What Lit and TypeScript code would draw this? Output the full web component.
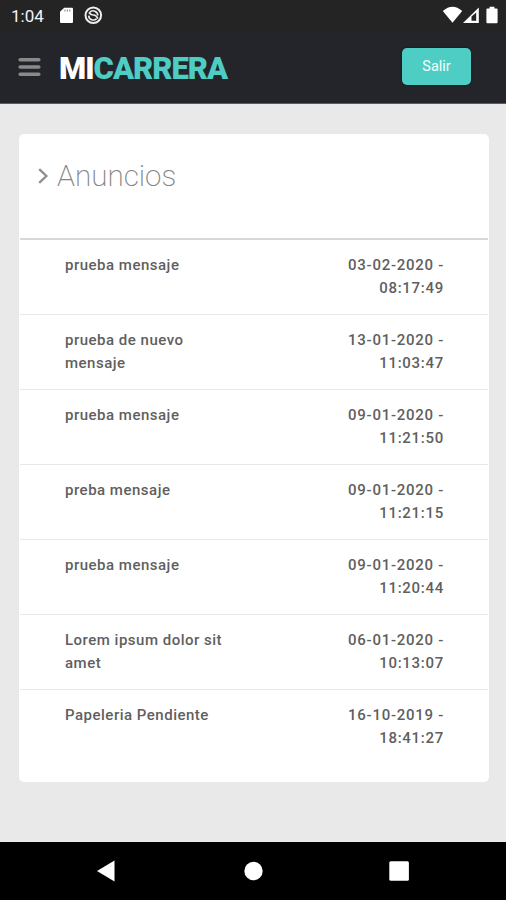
import { LitElement, html, css } from "lit";
import { customElement } from "lit/decorators.js";

interface Notice {
  title: string;
  date: string;
  time: string;
}

const notices: Notice[] = [
  { title: "prueba mensaje", date: "03-02-2020", time: "08:17:49" },
  { title: "prueba de nuevo mensaje", date: "13-01-2020", time: "11:03:47" },
  { title: "prueba mensaje", date: "09-01-2020", time: "11:21:50" },
  { title: "preba mensaje", date: "09-01-2020", time: "11:21:15" },
  { title: "prueba mensaje", date: "09-01-2020", time: "11:20:44" },
  { title: "Lorem ipsum dolor sit amet", date: "06-01-2020", time: "10:13:07" },
  { title: "Papeleria Pendiente", date: "16-10-2019", time: "18:41:27" },
];

@customElement("status-bar")
class StatusBar extends LitElement {
  static styles = css`
    :host {
      display: flex;
      align-items: center;
      height: 32px;
      box-sizing: border-box;
      padding: 0 7px 0 11px;
      background: #242424;
      color: #f4f4f4;
      font-size: 17px;
      line-height: 32px;
    }
    .clock { width: 48px; }
    .left { flex: 1; display: block; height: 32px; }
    .right { display: block; width: 60px; height: 32px; }
  `;
  render() {
    return html`
      <span class="clock">1:04</span>
      <svg class="left" viewBox="0 0 380 32" preserveAspectRatio="xMinYMid meet">
        <path d="M5.2 7.8H13q1 0 1 1V22q0 1-1 1H2q-1 0-1-1V11.8z" fill="#fff" />
        <path d="M6 9.4v2.2M8.4 9.4v2.2M10.8 9.4v2.2" stroke="#888" stroke-width="1.1" />
        <circle cx="34.3" cy="15.3" r="7.8" fill="none" stroke="#eee" stroke-width="2" />
        <path d="M30.6 12.6a4.6 4.6 0 0 1 8.2 3M37.6 18.6a4.6 4.6 0 0 1-7.9-3" fill="none" stroke="#eee" stroke-width="1.6" />
        <path d="M29.8 12.6q2.6 2.6 4.8 2.4t4.4 3.6" stroke="#eee" stroke-width="1.7" fill="none" />
      </svg>
      <svg class="right" viewBox="439 0 60 32">
        <path d="M442.8 11q9.7-8.6 19.4 0L452.5 22.8z" fill="#fff" />
        <path d="M463 23L478.8 7.4V23z" fill="#fff" />
        <path d="M471.5 20.8v-4.2l4.7-4.2v8.4z" fill="#242424" />
        <path d="M489.6 6.7h4.8v1.8h2.2q1 0 1 1V22.2q0 1-1 1h-9.2q-1 0-1-1V9.5q0-1 1-1h2.2z" fill="#fff" />
      </svg>
    `;
  }
}

@customElement("top-bar")
class TopBar extends LitElement {
  static styles = css`
    :host {
      display: flex;
      align-items: flex-start;
      height: 72px;
      box-sizing: border-box;
      padding: 0 35px 0 18px;
      background: #24252a;
      border-bottom: 1px solid #5b5b5e;
    }
    .menu { width: 23px; height: 20px; margin-top: 25px; }
    .brand {
      margin: 20px 0 0 18px;
      flex: 1;
      font-size: 31px;
      line-height: 34px;
      font-weight: 900;
      letter-spacing: -1px;
      color: #fff;
    }
    .accent { color: #4ecdc4; }
    .exit {
      width: 69px;
      height: 37px;
      margin-top: 16px;
      padding: 0;
      border: 0;
      border-radius: 5px;
      background: #4ecdc4;
      color: #f4fffe;
      font: 400 14.5px/37px Roboto, sans-serif;
      box-shadow: 0 0 2px #111216;
    }
  `;
  render() {
    return html`
      <svg class="menu" viewBox="0 0 23 20">
        <path d="M2.2 2.8h18.6M2.2 10h18.6M2.2 17.2h18.6" stroke="#8a8a8b" stroke-width="3.6" stroke-linecap="round" />
      </svg>
      <div class="brand">MI<span class="accent">CARRERA</span></div>
      <button class="exit">Salir</button>
    `;
  }
}

@customElement("notice-card")
class NoticeCard extends LitElement {
  static styles = css`
    :host {
      display: block;
      height: 648px;
      box-sizing: border-box;
      padding: 0 1px;
      background: #fff;
      border-radius: 5px;
      color: #5f5f5f;
    }
    .head {
      display: flex;
      align-items: center;
      height: 104px;
      box-sizing: border-box;
      padding: 0 0 20px 17px;
    }
    .chevron { width: 12px; height: 18px; margin-right: 8px; }
    .title {
      font-size: 29.6px;
      font-weight: 200;
      color: #858585;
    }
    .row {
      display: flex;
      justify-content: space-between;
      height: 75px;
      box-sizing: border-box;
      padding: 14px 44px 0 45px;
      border-top: 1px solid #e8e8e8;
      font-size: 15px;
      line-height: 22.5px;
      font-weight: 500;
      letter-spacing: 0.5px;
    }
    .row:nth-child(2) {
      height: 76px;
      border-top: 2px solid #d8d8d8;
    }
    .name { width: 165px; }
    .when { text-align: right; letter-spacing: 0.72px; }
  `;
  render() {
    return html`
      <div class="head">
        <svg class="chevron" viewBox="0 0 12 18">
          <path d="M2.2 2.2L9.4 9L2.2 15.8" fill="none" stroke="#8f8f8f" stroke-width="2.3" />
        </svg>
        <span class="title">Anuncios</span>
      </div>
      ${notices.map(
        (n) => html`<div class="row">
          <span class="name">${n.title}</span>
          <span class="when">${n.date} -<br />${n.time}</span>
        </div>`
      )}
    `;
  }
}

@customElement("nav-bar")
class NavBar extends LitElement {
  static styles = css`
    :host { display: block; height: 58px; background: #000; }
    svg { display: block; width: 506px; height: 58px; }
  `;
  render() {
    return html`<svg viewBox="0 0 506 58">
      <path d="M97 29L114.5 18.6V39.4z" fill="#fff" />
      <circle cx="253.5" cy="29" r="9.2" fill="#fff" />
      <rect x="389.3" y="19.3" width="19.6" height="19.4" rx="1.5" fill="#fff" />
    </svg>`;
  }
}

@customElement("app-root")
class AppRoot extends LitElement {
  static styles = css`
    :host {
      display: flex;
      flex-direction: column;
      width: 506px;
      height: 900px;
      overflow: hidden;
      background: #e9e9e9;
      font-family: Roboto, sans-serif;
    }
    .content { flex: 1; padding: 30px 17px 0 19px; }
  `;
  render() {
    return html`
      <status-bar></status-bar>
      <top-bar></top-bar>
      <main class="content"><notice-card></notice-card></main>
      <nav-bar></nav-bar>
    `;
  }
}
